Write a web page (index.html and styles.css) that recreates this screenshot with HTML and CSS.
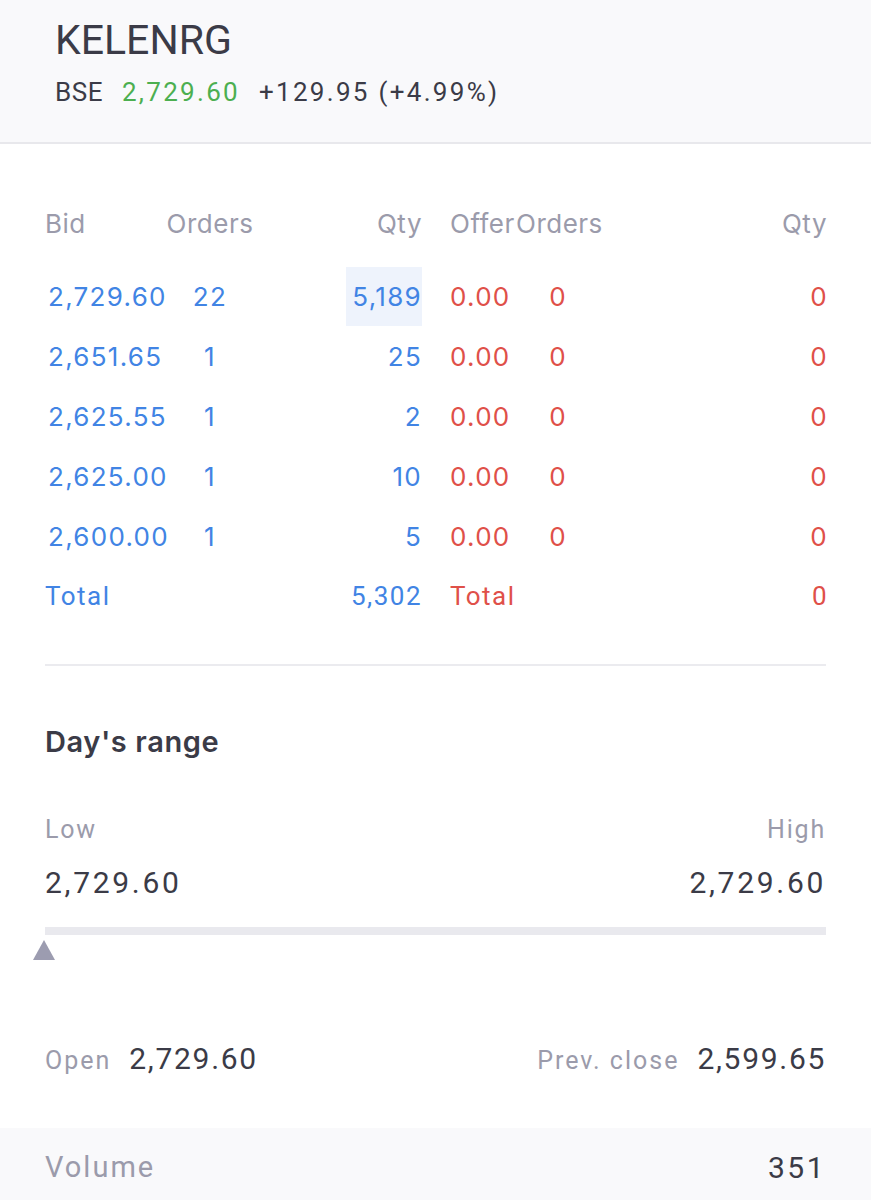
FILE: index.html
```html
<!DOCTYPE html>
<html lang="en">
    <head>
        <meta charset="UTF-8" />
        <meta name="viewport" content="width=device-width, initial-scale=1.0" />
        <title>KELENRG - Market depth</title>
        <link rel="stylesheet" href="styles.css">
    </head>
    <body>
        <!-- Instrument header -->
        <div class="quote-header">
            <h1 class="symbol">KELENRG</h1>
            <div class="quote-line">
                <span class="exchange">BSE</span>
                <span class="ltp">2,729.60</span>
                <span class="change">+129.95 (+4.99%)</span>
            </div>
        </div>

        <!-- Market depth -->
        <div class="depth">
            <div class="depth-row head">
                <span>Bid</span>
                <span class="center">Orders</span>
                <span class="right">Qty</span>
                <span class="offer">Offer</span>
                <span class="center">Orders</span>
                <span class="right">Qty</span>
            </div>
            <div class="depth-row">
                <span class="buy">2,729.60</span>
                <span class="buy center">22</span>
                <span class="buy right"><span class="hl">5,189</span></span>
                <span class="sell offer">0.00</span>
                <span class="sell center">0</span>
                <span class="sell right">0</span>
            </div>
            <div class="depth-row">
                <span class="buy">2,651.65</span>
                <span class="buy center">1</span>
                <span class="buy right">25</span>
                <span class="sell offer">0.00</span>
                <span class="sell center">0</span>
                <span class="sell right">0</span>
            </div>
            <div class="depth-row">
                <span class="buy">2,625.55</span>
                <span class="buy center">1</span>
                <span class="buy right">2</span>
                <span class="sell offer">0.00</span>
                <span class="sell center">0</span>
                <span class="sell right">0</span>
            </div>
            <div class="depth-row">
                <span class="buy">2,625.00</span>
                <span class="buy center">1</span>
                <span class="buy right">10</span>
                <span class="sell offer">0.00</span>
                <span class="sell center">0</span>
                <span class="sell right">0</span>
            </div>
            <div class="depth-row">
                <span class="buy">2,600.00</span>
                <span class="buy center">1</span>
                <span class="buy right">5</span>
                <span class="sell offer">0.00</span>
                <span class="sell center">0</span>
                <span class="sell right">0</span>
            </div>
            <div class="depth-row total">
                <span class="buy">Total</span>
                <span></span>
                <span class="buy right">5,302</span>
                <span class="sell offer">Total</span>
                <span></span>
                <span class="sell right">0</span>
            </div>
        </div>

        <!-- Day's range -->
        <div class="range">
            <h2>Day's range</h2>
            <div class="range-labels">
                <span>Low</span>
                <span>High</span>
            </div>
            <div class="range-values">
                <span>2,729.60</span>
                <span>2,729.60</span>
            </div>
            <div class="range-bar"></div>
            <div class="range-marker"></div>
        </div>

        <div class="ohlc">
            <div class="stat">
                <span class="label">Open</span>
                <span class="value">2,729.60</span>
            </div>
            <div class="stat">
                <span class="label">Prev. close</span>
                <span class="value">2,599.65</span>
            </div>
        </div>

        <div class="volume">
            <span class="label">Volume</span>
            <span class="value">351</span>
        </div>
    </body>
</html>
```

FILE: styles.css
```css
body {
    margin: 0;
    font-family: Inter, "Noto Sans", sans-serif;
    color: #3b3b47;
    background: #fff;
}
.quote-header {
    background: #f9f9fb;
    border-bottom: 2px solid #e8e8ec;
    padding: 18px 55px 0;
    height: 124px;
}
.symbol {
    margin: 0;
    font-family: Roboto, sans-serif;
    font-weight: 400;
    font-size: 41px;
    line-height: 44px;
    color: #3b3b47;
}
.quote-line {
    margin-top: 14px;
    font-family: Roboto, sans-serif;
    font-size: 26px;
    line-height: 32px;
    display: flex;
    gap: 19px;
}
.exchange {
    letter-spacing: 0.5px;
}
.ltp,
.change {
    letter-spacing: 2.3px;
}
.ltp {
    color: #4caf50;
}

.depth {
    margin: 49px 45px 0;
    padding-bottom: 38px;
    border-bottom: 2px solid #ebebef;
}
.depth-row {
    display: grid;
    grid-template-columns: 120px 90px 166px 95px 84px 1fr;
    height: 60px;
    align-items: center;
    font-size: 26px;
    letter-spacing: 1.3px;
}
.depth-row.head {
    color: #9b9bab;
    letter-spacing: 0.5px;
    margin-bottom: 13px;
}
.center {
    text-align: center;
}
.right {
    text-align: right;
    margin-right: -1px;
}
.offer {
    padding-left: 29px;
}
.buy {
    color: #4184e4;
    padding-left: 3px;
}
.buy.right,
.buy.center {
    padding-left: 0;
}
.buy.right {
    margin-right: -1px;
}
.sell {
    color: #df5049;
}
.sell.right {
    margin-right: -2px;
}
.hl {
    display: inline-block;
    background: #eef3fc;
    height: 59px;
    line-height: 59px;
    padding: 0 0 0 6px;
}
.total {
    font-family: Roboto, sans-serif;
    letter-spacing: 1.5px;
}
.total .buy {
    padding-left: 0;
}

.range {
    padding: 0 45px;
}
.range h2 {
    margin: 56px 0 0;
    font-size: 29px;
    font-weight: 600;
    letter-spacing: 0.6px;
    line-height: 40px;
}
.range-labels,
.range-values {
    display: flex;
    justify-content: space-between;
}
.range-labels {
    margin-top: 48px;
    font-family: Roboto, sans-serif;
    color: #9b9bab;
    font-size: 25px;
    letter-spacing: 1.8px;
    line-height: 40px;
}
.range-values {
    margin-top: 13px;
    font-family: Roboto, sans-serif;
    font-size: 30px;
    letter-spacing: 2.7px;
    line-height: 40px;
}
.range-bar {
    margin-top: 24px;
    height: 8px;
    background: #e9e9ee;
}
.range-marker {
    margin: 5px 0 0 -12px;
    width: 0;
    height: 0;
    border-left: 11px solid transparent;
    border-right: 11px solid transparent;
    border-bottom: 20px solid #9c9cb0;
}

.ohlc {
    display: flex;
    justify-content: space-between;
    padding: 0 45px;
    margin-top: 78px;
    height: 40px;
    align-items: center;
}
.stat {
    display: flex;
    align-items: baseline;
    gap: 18px;
}
.label {
    font-family: Roboto, sans-serif;
    color: #9b9bab;
    font-size: 25px;
    letter-spacing: 2px;
}
.value {
    font-family: Roboto, sans-serif;
    font-size: 30px;
    letter-spacing: 1.7px;
}
.volume {
    margin-top: 50px;
    background: #f9f9fb;
    display: flex;
    justify-content: space-between;
    align-items: center;
    padding: 0 45px;
    height: 78px;
}
.volume .label {
    font-size: 29px;
    letter-spacing: 2px;
}
.volume .value {
    letter-spacing: 2.5px;
}
```
